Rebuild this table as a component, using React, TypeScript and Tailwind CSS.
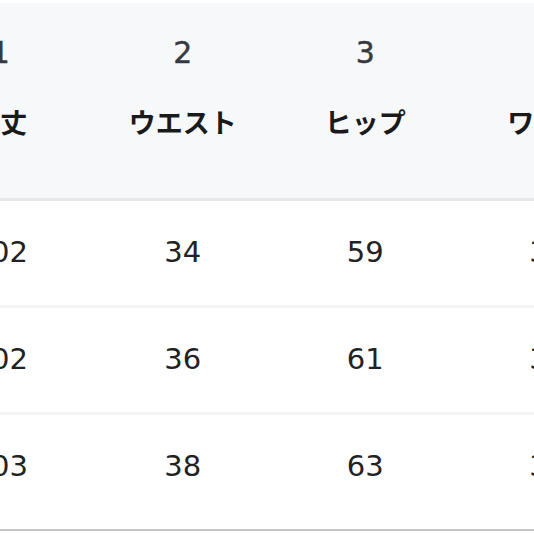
import React from 'react';

const cols = [
  { no: '1', label: '総丈' },
  { no: '2', label: 'ウエスト' },
  { no: '3', label: 'ヒップ' },
  { no: '4', label: 'ワタリ' },
];

const rows = [
  ['102', '34', '59', '30'],
  ['102', '36', '61', '31'],
  ['103', '38', '63', '32'],
];

const num = { fontFamily: '"DejaVu Sans", "Liberation Sans", sans-serif' };

const App: React.FC = () => {
  return (
    <div
      className="w-[534px] h-[534px] overflow-hidden bg-white"
      style={{ fontFamily: '"Noto Sans CJK JP", "Noto Sans", sans-serif' }}
    >
      <div className="ml-[-91px] w-max pt-[3px]">
        {/* Header */}
        <div className="bg-[#f7f8fa] border-b-[3px] border-[#e6e8eb] h-[198px] flex flex-col">
          <div className="flex pt-[25px]">
            {cols.map((c) => (
              <div
                key={c.no}
                className="w-[182.5px] text-center text-[30px] leading-[50px] text-[#363a40] [-webkit-text-stroke:0.4px_#363a40]"
                style={num}
              >
                {c.no}
              </div>
            ))}
          </div>
          <div className="flex pt-[24px]">
            {cols.map((c) => (
              <div key={c.label} className="w-[182.5px] text-center text-[27px] leading-[40px] font-bold text-[#1a1a1a]">
                {c.label}
              </div>
            ))}
          </div>
        </div>

        {/* Body */}
        {rows.map((r, i) => (
          <div
            key={i}
            className={`flex items-center ${i === rows.length - 1 ? 'h-[116px] pb-[10px] border-b-[2px] border-[#c4c4c4]' : 'h-[107px] border-b-[3px] border-[#f3f4f6]'}`}
          >
            {r.map((v, j) => (
              <div key={j} className="w-[182.5px] text-center text-[29px] text-[#222]" style={num}>
                {v}
              </div>
            ))}
          </div>
        ))}
      </div>
    </div>
  );
};

export default App;
